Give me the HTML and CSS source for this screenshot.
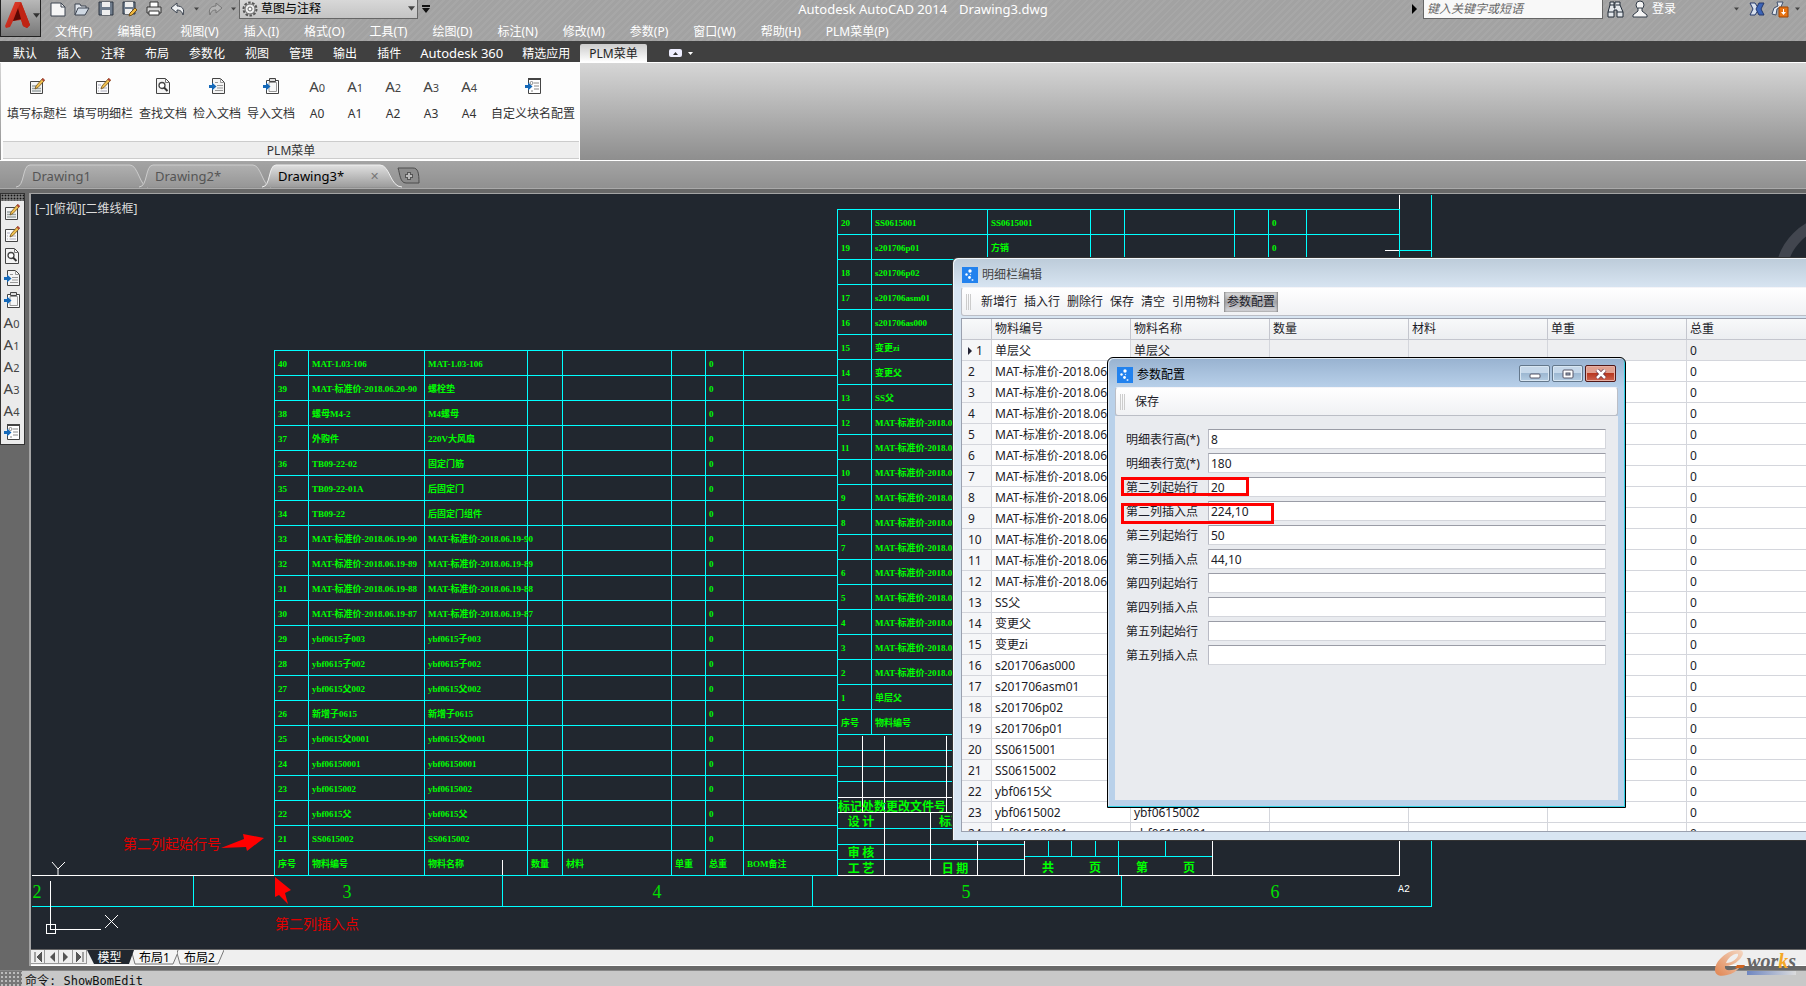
FILE: index.html
```html
<!DOCTYPE html>
<html lang="zh-CN">
<head>
<meta charset="utf-8">
<title>Autodesk AutoCAD 2014 - Drawing3.dwg</title>
<link rel="stylesheet" href="styles.css">
</head>
<body>
<svg class="defs" aria-hidden="true">
  <defs>
    <linearGradient id="tabOff" x1="0" y1="0" x2="0" y2="1"><stop offset="0" stop-color="#b0b0b0"/><stop offset="1" stop-color="#969696"/></linearGradient>
    <linearGradient id="tabOn" x1="0" y1="0" x2="0" y2="1"><stop offset="0" stop-color="#e0e0e0"/><stop offset="1" stop-color="#9c9c9c"/></linearGradient>
    <linearGradient id="red" x1="0" y1="0" x2="1" y2="1"><stop offset="0" stop-color="#e84432"/><stop offset="1" stop-color="#a81408"/></linearGradient>
    <linearGradient id="swoosh" x1="0" y1="1" x2="1" y2="0"><stop offset="0" stop-color="#e08450"/><stop offset="1" stop-color="#f4d8c4"/></linearGradient>
    <symbol id="i-pen" viewBox="0 0 16 16"><path d="M1.500 3.500H13.500V15.500H1.500Z" fill="#f4f4f4" stroke="#444"/><path d="M3 8H7M3 10.500H12M3 13H12" stroke="#9aa4a4" stroke-width="1.500"/><path d="M6 11L7 8L13.500 .5L15.500 2.500L9 9.500Z" fill="#f0c050" stroke="#70501c" stroke-width=".8"/><path d="M12.500 1.500L14 0L16 2L14.500 3.500Z" fill="#b04838"/></symbol>
    <symbol id="i-list" viewBox="0 0 16 16"><path d="M1.500 3.500H13.500V15.500H1.500Z" fill="#fafafa" stroke="#444"/><path d="M3 7H6M3 10H4M5.500 10H12M3 13H4M5.500 13H12" stroke="#aab" stroke-width="1"/><path d="M6 11L7 8L13.500 .5L15.500 2.500L9 9.500Z" fill="#f0c050" stroke="#70501c" stroke-width=".8"/><path d="M12.500 1.500L14 0L16 2L14.500 3.500Z" fill="#b04838"/></symbol>
    <symbol id="i-find" viewBox="0 0 16 16"><path d="M1.500 .5H10.500L14.500 4.500V15.500H1.500Z" fill="#f4f4f4" stroke="#444"/><path d="M10.500 .5V4.500H14.500" fill="none" stroke="#777"/><circle cx="7" cy="7.500" r="3" fill="#fff" stroke="#444" stroke-width="1.300"/><path d="M9 9.500L12.500 13" stroke="#333" stroke-width="2"/></symbol>
    <symbol id="i-in" viewBox="0 0 16 16"><path d="M3.500 .5H11.500L15.500 4.500V15.500H3.500Z" fill="#f4f4f4" stroke="#444"/><path d="M11.500 .5V4.500H15.500M6 4.500H9M8 7.500H14M8 10H14M6 12.500H14" fill="none" stroke="#999"/><path d="M0 7H3V4.500L7.500 8.500L3 12.500V10H0Z" fill="#1468b8"/></symbol>
    <symbol id="i-clip" viewBox="0 0 16 16"><path d="M3.500 2.500H15.500V15.500H3.500Z" fill="#fff" stroke="#444"/><path d="M6 4.500H13.500V13.500H6Z" fill="#f7f7f7" stroke="#999"/><path d="M6.500 .5H12.500V3.500H6.500Z" fill="#ddd" stroke="#444"/><path d="M0 7H3V4.500L7.500 8.500L3 12.500V10H0Z" fill="#1468b8"/></symbol>
    <symbol id="i-cfg" viewBox="0 0 16 16"><path d="M3.500 .5H15.500V15.500H3.500Z" fill="#fff" stroke="#444"/><path d="M3 1H16" stroke="#444" stroke-width="2"/><circle cx="6.500" cy="5" r="1.500" fill="none" stroke="#888"/><path d="M9 5H14M9 8H14M9 11H14M6 13H8" stroke="#888"/><path d="M0 7H3V4.500L7.500 8.500L3 12.500V10H0Z" fill="#1468b8"/></symbol>
    <symbol id="i-app" viewBox="0 0 16 16"><path d="M0 0H16V16H0Z" fill="#2282ee"/><circle cx="8" cy="4" r="1.700" fill="#fff"/><circle cx="4.500" cy="7.500" r="1.200" fill="#fff"/><circle cx="7.500" cy="10.500" r="1.400" fill="#fff"/><circle cx="10.500" cy="13" r="1" fill="#cfe4ff"/><circle cx="8.500" cy="7.500" r=".7" fill="#cfe4ff"/></symbol>
    <symbol id="i-down" viewBox="0 0 8 5"><path d="M0 0H8L4 5Z" fill="currentColor"/></symbol>
  </defs>
</svg>

<div class="app">
  <header class="top">
    <button class="app-btn" aria-label="应用程序菜单">
      <svg width="26" height="30" viewBox="0 0 26 30"><path d="M10 2H16L25 25L22 28L18 26L16 20L8 21L5 27L1 28L0 26Z" fill="url(#red)"/><path d="M16 2L25 25L22 28L18 26L13 8Z" fill="#c02414"/><path d="M13 8L16 19L8 21Z" fill="#5c0804"/></svg>
      <svg width="7" height="5"><use href="#i-down"/></svg>
    </button>
    <div class="top-main">
      <div class="title-row">
        <div class="qat">
          <button aria-label="新建"><svg width="16" height="16"><path d="M1 2H11L15 6V15H1Z" fill="#f6f6f6" stroke="#3c4450"/><path d="M11 2V6H15" fill="none" stroke="#3c4450"/></svg></button>
          <button aria-label="打开"><svg width="16" height="16"><path d="M1 14V3H6L7 5H12V8" fill="#dfe4ea" stroke="#3c4450"/><path d="M1 14L4 7H15L11 14Z" fill="#cfd8e2" stroke="#3c4450"/></svg></button>
          <button aria-label="保存"><svg width="16" height="16"><path d="M1 1H15V14H1Z" fill="#6f7c8c" stroke="#2c3440"/><path d="M4 1H12V6H4ZM4 9H12V14H4Z" fill="#eee"/></svg></button>
          <button aria-label="另存为"><svg width="16" height="16"><path d="M1 1H13V13H1Z" fill="#6f7c8c" stroke="#2c3440"/><path d="M3 1H11V6H3ZM3 8H10V13H3Z" fill="#eee"/><path d="M7 15L8 12L13 7L15 9L10 14Z" fill="#f0b840" stroke="#70501c"/></svg></button>
          <button aria-label="打印"><svg width="16" height="16"><path d="M4 1H12V7H4Z" fill="#fff" stroke="#333"/><path d="M1 6H15V12H1Z" fill="#d4d4d4" stroke="#333"/><path d="M3 10H13V14H3Z" fill="#fff" stroke="#333"/></svg></button>
          <button aria-label="放弃"><svg width="16" height="16"><path d="M1 7L7 2V5C12 5 15 8 13 14C12 11 11 9 7 9V12Z" fill="#eef0f2" stroke="#3c4450"/></svg></button>
          <button class="drop" aria-label="放弃列表"><svg width="5" height="4"><use href="#i-down"/></svg></button>
          <button aria-label="重做"><svg width="16" height="16"><path d="M15 7L9 2V5C4 5 1 8 3 14C4 11 5 9 9 9V12Z" fill="#b4b4b4" stroke="#777"/></svg></button>
          <button class="drop" aria-label="重做列表"><svg width="5" height="4"><use href="#i-down"/></svg></button>
        </div>
        <div class="workspace">
          <svg width="16" height="16" viewBox="0 0 16 16"><circle cx="8" cy="8" r="6.500" fill="none" stroke="#555" stroke-width="2" stroke-dasharray="2.500 1.500"/><circle cx="8" cy="8" r="5" fill="#eee" stroke="#666"/><circle cx="8" cy="8" r="2" fill="#fff" stroke="#666"/></svg>
          <select aria-label="工作空间"><option>草图与注释</option></select>
          <svg class="caret" width="7" height="5"><use href="#i-down"/></svg>
        </div>
        <svg class="qat-more" width="8" height="8"><path d="M0 0H8V2H0ZM0 3H8L4 8Z" fill="#111"/></svg>
        <div class="doc-title"><span>Autodesk AutoCAD 2014</span><span>Drawing3.dwg</span></div>
        <div class="infocenter">
          <svg width="5" height="10"><path d="M0 0L5 5L0 10Z" fill="#000"/></svg>
          <input class="search" type="text" placeholder="键入关键字或短语" aria-label="键入关键字或短语">
          <button aria-label="搜索"><svg width="17" height="18"><path d="M3 2H7V8H8V2H13V5L16 12V17H10V10H7V17H1V12L3 5Z" fill="#e4e8ec" stroke="#222c38"/><path d="M3 5H7M9 5H13M1 12H7M10 12H16" stroke="#222c38"/></svg></button>
          <button class="login"><svg width="16" height="18"><circle cx="8" cy="5" r="4" fill="#f4f4f4" stroke="#333c48"/><path d="M6 8V11L1 15V17H15V15L10 11V8Z" fill="#f4f4f4" stroke="#333c48"/></svg><span>登录</span></button>
          <button class="drop wide" aria-label="登录选项"><svg width="5" height="4"><use href="#i-down"/></svg></button>
          <button aria-label="Exchange"><svg width="16" height="16"><path d="M1 2H6L10 8L6 14H1L4 8Z" fill="#d8e0ee" stroke="#24386c"/><path d="M15 2H10L7 8L10 14H15L12 8Z" fill="#3c64b8" stroke="#24386c"/></svg></button>
          <button aria-label="保持连接"><svg width="18" height="17"><path d="M6 1L12 1L10 6L6 8L5 14L1 13L3 7L7 5Z" fill="#e4e8f0" stroke="#40506c"/><path d="M8 6H17V16H8Z" fill="#e87414" stroke="#9c4404"/><path d="M12 8H13V11H15L12.500 14L10 11H12Z" fill="#fff"/></svg></button>
          <button class="drop" aria-label="更多"><svg width="5" height="4"><use href="#i-down"/></svg></button>
        </div>
      </div>
      <nav class="menu">
        <a href="#">文件(F)</a><a href="#">编辑(E)</a><a href="#">视图(V)</a><a href="#">插入(I)</a><a href="#">格式(O)</a><a href="#">工具(T)</a><a href="#">绘图(D)</a><a href="#">标注(N)</a><a href="#">修改(M)</a><a href="#">参数(P)</a><a href="#">窗口(W)</a><a href="#">帮助(H)</a><a href="#">PLM菜单(P)</a>
      </nav>
    </div>
  </header>

  <div class="ribbon-tabs">
    <button>默认</button><button>插入</button><button>注释</button><button>布局</button><button>参数化</button><button>视图</button><button>管理</button><button>输出</button><button>插件</button><button class="latin">Autodesk 360</button><button>精选应用</button><button class="on">PLM菜单</button>
    <button class="mini" aria-label="最小化功能区"><svg width="26" height="10"><rect x="0" y="1" width="13" height="8" rx="2" fill="#eef"/><path d="M4 7L6.500 4L9 7Z" fill="#333"/><path d="M19 4H24L21.500 7Z" fill="#fff"/></svg></button>
  </div>

  <section class="ribbon">
    <div class="panel">
      <div class="panel-buttons">
        <button><svg width="16" height="16"><use href="#i-pen"/></svg><span>填写标题栏</span></button>
        <button><svg width="16" height="16"><use href="#i-list"/></svg><span>填写明细栏</span></button>
        <button><svg width="16" height="16"><use href="#i-find"/></svg><span>查找文档</span></button>
        <button><svg width="16" height="16"><use href="#i-in"/></svg><span>检入文档</span></button>
        <button><svg width="16" height="16"><use href="#i-clip"/></svg><span>导入文档</span></button>
        <button class="size"><b>A<small>0</small></b><span>A0</span></button>
        <button class="size"><b>A<small>1</small></b><span>A1</span></button>
        <button class="size"><b>A<small>2</small></b><span>A2</span></button>
        <button class="size"><b>A<small>3</small></b><span>A3</span></button>
        <button class="size"><b>A<small>4</small></b><span>A4</span></button>
        <button><svg width="16" height="16"><use href="#i-cfg"/></svg><span>自定义块名配置</span></button>
      </div>
      <div class="panel-title">PLM菜单</div>
    </div>
  </section>

  <div class="file-tabs">
    <button><svg viewBox="0 0 132 24" preserveAspectRatio="none"><path d="M0 23C9 23 6 1 14 1H114C122 1 124 23 132 23" fill="url(#tabOff)" stroke="#ccc"/></svg><span>Drawing1</span></button>
    <button><svg viewBox="0 0 132 24" preserveAspectRatio="none"><path d="M0 23C9 23 6 1 14 1H114C122 1 124 23 132 23" fill="url(#tabOff)" stroke="#ccc"/></svg><span>Drawing2*</span></button>
    <button class="on"><svg viewBox="0 0 140 24" preserveAspectRatio="none"><path d="M0 23C9 23 6 1 14 1H118C128 1 128 23 140 23" fill="url(#tabOn)" stroke="#eee"/></svg><span>Drawing3*</span><i>✕</i></button>
    <button class="new" aria-label="新图形"><svg width="24" height="18"><path d="M1 1H16C21 1 22 6 22 16H9C3 16 3 7 1 1Z" fill="#8c8c8c" stroke="#4c4c4c"/><path d="M8 9H16M12 5V13" stroke="#555" stroke-width="4"/><path d="M9 9H15M12 6V12" stroke="#bbb" stroke-width="2"/></svg></button>
  </div>

  <main class="work">
    <aside class="tools">
      <div class="grip"></div>
      <button aria-label="填写标题栏"><svg width="16" height="16"><use href="#i-pen"/></svg></button>
      <button aria-label="填写明细栏"><svg width="16" height="16"><use href="#i-list"/></svg></button>
      <button aria-label="查找文档"><svg width="16" height="16"><use href="#i-find"/></svg></button>
      <button aria-label="检入文档"><svg width="16" height="16"><use href="#i-in"/></svg></button>
      <button aria-label="导入文档"><svg width="16" height="16"><use href="#i-clip"/></svg></button>
      <button><b>A<small>0</small></b></button>
      <button><b>A<small>1</small></b></button>
      <button><b>A<small>2</small></b></button>
      <button><b>A<small>3</small></b></button>
      <button><b>A<small>4</small></b></button>
      <button aria-label="自定义块名配置"><svg width="16" height="16"><use href="#i-cfg"/></svg></button>
    </aside>

    <div class="view">
      <div class="canvas">
        <div class="view-label">[−][俯视][二维线框]</div>
        <svg class="sheet" width="1775" height="755" viewBox="31 194 1775 755">
          <circle cx="1836" cy="276" r="55" fill="none" stroke="#42464f" stroke-width="11"/>
          <g transform="translate(.5 .5)" fill="none" shape-rendering="crispEdges">
            <path stroke="#0ff" d="M31 906H1431V194M193 875V906M502 875V906M812 875V906M1121 875V906M1399 209V875M1399 250H1431M837 734V875M837 750H1024M837 766H1024M837 781H1024M837 828H1024M837 844H1024M837 859H1024M1024 856H1212M1048 835V856M1071 835V856M1095 835V856M1118 835V875M1165 835V856"/>
            <path stroke="#fff" d="M31 875H274M837 875H1399V735M1399 194V209M1384 250H1399M502 859V875M862 735V812M884 735V875M946 735V812M837 797H1024M837 812H1024M930 812V875M977 812V875M1024 812V875M1212 835V875"/>
            <path stroke="#fff" d="M50 880V929H100M46 924H55V933H46Z"/>
          </g>
          <path d="M52 862L58 869L65 862M58 869V875M105 915L118 928M118 915L105 928" fill="none" stroke="#fff"/>
          <path d="M221 848L244 839L243 834L264 838L247 851L246 847ZM275 877L291 890L285 893L288 904L279 895L275 897Z" fill="#f00"/>
          <g class="zone">
            <text x="37" y="898">2</text><text x="347" y="898">3</text><text x="657" y="898">4</text><text x="966" y="898">5</text><text x="1275" y="898">6</text>
          </g>
          <g class="block">
            <text x="850" y="811">标记</text><text x="874" y="811">处数</text>
            <text x="916" y="811">更改文件号</text><text x="861" y="826">设 计</text><text x="951" y="826">标准</text>
            <text x="861" y="857">审 核</text><text x="861" y="873">工 艺</text><text x="955" y="873">日 期</text>
            <text x="1048" y="872">共</text><text x="1095" y="872">页</text><text x="1142" y="872">第</text><text x="1189" y="872">页</text>
          </g>
          <text class="a2" x="1398" y="892">A2</text>
          <g class="note"><text x="123" y="849">第二列起始行号</text><text x="275" y="929">第二列插入点</text></g>
        </svg>

        <table class="bom bom-left">
          <colgroup><col class="w34"><col class="w116"><col class="w103"><col class="w35"><col class="w109"><col class="w34"><col class="w38"><col class="w94"></colgroup>
          <tbody>
          <tr><td>40<td>MAT-1.03-106<td>MAT-1.03-106<td><td><td><td>0<td></tr>
          <tr><td>39<td>MAT-标准价-2018.06.20-90<td>螺栓垫<td><td><td><td>0<td></tr>
          <tr><td>38<td>螺母M4-2<td>M4螺母<td><td><td><td>0<td></tr>
          <tr><td>37<td>外购件<td>220V大风扇<td><td><td><td>0<td></tr>
          <tr><td>36<td>TB09-22-02<td>固定门筋<td><td><td><td>0<td></tr>
          <tr><td>35<td>TB09-22-01A<td>后固定门<td><td><td><td>0<td></tr>
          <tr><td>34<td>TB09-22<td>后固定门组件<td><td><td><td>0<td></tr>
          <tr><td>33<td>MAT-标准价-2018.06.19-90<td>MAT-标准价-2018.06.19-90<td><td><td><td>0<td></tr>
          <tr><td>32<td>MAT-标准价-2018.06.19-89<td>MAT-标准价-2018.06.19-89<td><td><td><td>0<td></tr>
          <tr><td>31<td>MAT-标准价-2018.06.19-88<td>MAT-标准价-2018.06.19-88<td><td><td><td>0<td></tr>
          <tr><td>30<td>MAT-标准价-2018.06.19-87<td>MAT-标准价-2018.06.19-87<td><td><td><td>0<td></tr>
          <tr><td>29<td>ybf0615子003<td>ybf0615子003<td><td><td><td>0<td></tr>
          <tr><td>28<td>ybf0615子002<td>ybf0615子002<td><td><td><td>0<td></tr>
          <tr><td>27<td>ybf0615父002<td>ybf0615父002<td><td><td><td>0<td></tr>
          <tr><td>26<td>新增子0615<td>新增子0615<td><td><td><td>0<td></tr>
          <tr><td>25<td>ybf0615父0001<td>ybf0615父0001<td><td><td><td>0<td></tr>
          <tr><td>24<td>ybf06150001<td>ybf06150001<td><td><td><td>0<td></tr>
          <tr><td>23<td>ybf0615002<td>ybf0615002<td><td><td><td>0<td></tr>
          <tr><td>22<td>ybf0615父<td>ybf0615父<td><td><td><td>0<td></tr>
          <tr><td>21<td>SS0615002<td>SS0615002<td><td><td><td>0<td></tr>
          <tr><td>序号<td>物料编号<td>物料名称<td>数量<td>材料<td>单重<td>总重<td>BOM备注</tr>
          </tbody>
        </table>

        <table class="bom bom-right">
          <colgroup><col class="w34"><col class="w116"><col class="w103"><col class="w34"><col class="w110"><col class="w34"><col class="w38"><col class="w93"></colgroup>
          <tbody>
          <tr><td>20<td>SS0615001<td>SS0615001<td><td><td><td>0<td></tr>
          <tr><td>19<td>s201706p01<td>方销<td><td><td><td>0<td></tr>
          <tr><td>18<td>s201706p02<td><td><td><td><td><td></tr>
          <tr><td>17<td>s201706asm01<td><td><td><td><td><td></tr>
          <tr><td>16<td>s201706as000<td><td><td><td><td><td></tr>
          <tr><td>15<td>变更zi<td><td><td><td><td><td></tr>
          <tr><td>14<td>变更父<td><td><td><td><td><td></tr>
          <tr><td>13<td>SS父<td><td><td><td><td><td></tr>
          <tr><td>12<td>MAT-标准价-2018.06.<td><td><td><td><td><td></tr>
          <tr><td>11<td>MAT-标准价-2018.06.<td><td><td><td><td><td></tr>
          <tr><td>10<td>MAT-标准价-2018.06.<td><td><td><td><td><td></tr>
          <tr><td>9<td>MAT-标准价-2018.06.<td><td><td><td><td><td></tr>
          <tr><td>8<td>MAT-标准价-2018.06.<td><td><td><td><td><td></tr>
          <tr><td>7<td>MAT-标准价-2018.06.<td><td><td><td><td><td></tr>
          <tr><td>6<td>MAT-标准价-2018.06.<td><td><td><td><td><td></tr>
          <tr><td>5<td>MAT-标准价-2018.06.<td><td><td><td><td><td></tr>
          <tr><td>4<td>MAT-标准价-2018.06.<td><td><td><td><td><td></tr>
          <tr><td>3<td>MAT-标准价-2018.06.<td><td><td><td><td><td></tr>
          <tr><td>2<td>MAT-标准价-2018.06.<td><td><td><td><td><td></tr>
          <tr><td>1<td>单层父<td><td><td><td><td><td></tr>
          <tr><td>序号<td>物料编号<td><td><td><td><td><td></tr>
          </tbody>
        </table>

        <section class="win editor">
          <div class="win-title"><svg width="16" height="16"><use href="#i-app"/></svg><span>明细栏编辑</span></div>
          <div class="win-tools">
            <button>新增行</button><button>插入行</button><button>删除行</button><button>保存</button><button>清空</button><button>引用物料</button><button class="on">参数配置</button>
          </div>
          <div class="grid-box">
            <table class="grid">
              <colgroup><col class="c-no"><col class="c-std"><col class="c-std"><col class="c-std"><col class="c-std"><col class="c-std"><col></colgroup>
              <thead><tr><th></th><th scope="col">物料编号</th><th scope="col">物料名称</th><th scope="col">数量</th><th scope="col">材料</th><th scope="col">单重</th><th scope="col">总重</th></tr></thead>
              <tbody>
              <tr class="cur"><th scope="row"><svg width="4" height="8"><path d="M0 0L4 4L0 8Z" fill="#223"/></svg>1</th><td>单层父<td>单层父<td><td><td><td>0</tr>
              <tr><th scope="row">2</th><td>MAT-标准价-2018.06.<td><td><td><td><td>0</tr>
              <tr><th scope="row">3</th><td>MAT-标准价-2018.06.<td><td><td><td><td>0</tr>
              <tr><th scope="row">4</th><td>MAT-标准价-2018.06.<td><td><td><td><td>0</tr>
              <tr><th scope="row">5</th><td>MAT-标准价-2018.06.<td><td><td><td><td>0</tr>
              <tr><th scope="row">6</th><td>MAT-标准价-2018.06.<td><td><td><td><td>0</tr>
              <tr><th scope="row">7</th><td>MAT-标准价-2018.06.<td><td><td><td><td>0</tr>
              <tr><th scope="row">8</th><td>MAT-标准价-2018.06.<td><td><td><td><td>0</tr>
              <tr><th scope="row">9</th><td>MAT-标准价-2018.06.<td><td><td><td><td>0</tr>
              <tr><th scope="row">10</th><td>MAT-标准价-2018.06.<td><td><td><td><td>0</tr>
              <tr><th scope="row">11</th><td>MAT-标准价-2018.06.<td><td><td><td><td>0</tr>
              <tr><th scope="row">12</th><td>MAT-标准价-2018.06.<td><td><td><td><td>0</tr>
              <tr><th scope="row">13</th><td>SS父<td><td><td><td><td>0</tr>
              <tr><th scope="row">14</th><td>变更父<td><td><td><td><td>0</tr>
              <tr><th scope="row">15</th><td>变更zi<td><td><td><td><td>0</tr>
              <tr><th scope="row">16</th><td>s201706as000<td><td><td><td><td>0</tr>
              <tr><th scope="row">17</th><td>s201706asm01<td><td><td><td><td>0</tr>
              <tr><th scope="row">18</th><td>s201706p02<td><td><td><td><td>0</tr>
              <tr><th scope="row">19</th><td>s201706p01<td><td><td><td><td>0</tr>
              <tr><th scope="row">20</th><td>SS0615001<td><td><td><td><td>0</tr>
              <tr><th scope="row">21</th><td>SS0615002<td><td><td><td><td>0</tr>
              <tr><th scope="row">22</th><td>ybf0615父<td><td><td><td><td>0</tr>
              <tr><th scope="row">23</th><td>ybf0615002<td>ybf0615002<td><td><td><td>0</tr>
              <tr><th scope="row">24</th><td>ybf06150001<td>ybf06150001<td><td><td><td>0</tr>
              </tbody>
            </table>
          </div>
        </section>

        <section class="win dialog">
          <div class="win-title">
            <svg width="16" height="16"><use href="#i-app"/></svg><span>参数配置</span>
            <div class="win-btns">
              <button aria-label="最小化"><svg width="12" height="10"><rect x="1" y="5" width="10" height="4" rx="1" fill="#fff" stroke="#556"/></svg></button>
              <button aria-label="最大化"><svg width="12" height="10"><rect x="1" y="1" width="10" height="8" rx="1" fill="#fff" stroke="#556"/><rect x="4" y="4" width="4" height="2" fill="#9ab" stroke="#556"/></svg></button>
              <button class="close" aria-label="关闭"><svg width="12" height="10"><path d="M2 1L10 9M10 1L2 9" stroke="#634" stroke-width="4"/><path d="M2 1L10 9M10 1L2 9" stroke="#fff" stroke-width="2.500"/></svg></button>
            </div>
          </div>
          <div class="win-tools"><button>保存</button></div>
          <form class="params">
            <label for="p1">明细表行高(*)</label><input id="p1" type="text" value="8">
            <label for="p2">明细表行宽(*)</label><input id="p2" type="text" value="180">
            <label for="p3">第二列起始行</label><input id="p3" type="text" value="20">
            <label for="p4">第二列插入点</label><input id="p4" type="text" value="224,10">
            <label for="p5">第三列起始行</label><input id="p5" type="text" value="50">
            <label for="p6">第三列插入点</label><input id="p6" type="text" value="44,10">
            <label for="p7">第四列起始行</label><input id="p7" type="text">
            <label for="p8">第四列插入点</label><input id="p8" type="text">
            <label for="p9">第五列起始行</label><input id="p9" type="text">
            <label for="p10">第五列插入点</label><input id="p10" type="text">
          </form>
          <div class="mark mark-row"></div>
          <div class="mark mark-point"></div>
        </section>
      </div>

      <div class="layouts">
        <button class="nav" aria-label="第一个"><svg width="8" height="10"><path d="M1 0V10M8 0L3 5L8 10Z" fill="#555" stroke="#555"/></svg></button>
        <button class="nav" aria-label="上一个"><svg width="8" height="10"><path d="M7 0L2 5L7 10Z" fill="#555"/></svg></button>
        <button class="nav" aria-label="下一个"><svg width="8" height="10"><path d="M1 0L6 5L1 10Z" fill="#555"/></svg></button>
        <button class="nav" aria-label="最后一个"><svg width="8" height="10"><path d="M7 0V10M0 0L5 5L0 10Z" fill="#555" stroke="#555"/></svg></button>
        <button class="lay on"><svg width="47" height="15"><path d="M0 0H47L42 14H7Z" fill="#21272f"/></svg><span>模型</span></button>
        <button class="lay"><svg width="47" height="15"><path d="M1 0L0 3L3 14H41L47 0" fill="#f4f4f4" stroke="#777"/></svg><span>布局1</span></button>
        <button class="lay"><svg width="47" height="15"><path d="M1 0L0 3L3 14H41L47 0" fill="#f4f4f4" stroke="#777"/></svg><span>布局2</span></button>
      </div>
    </div>
  </main>

  <footer class="command">
    <div class="cmd-grip"></div>
    <div class="cmd-text">命令: ShowBomEdit</div>
  </footer>

  <div class="brand">
    <svg width="32" height="28" viewBox="0 0 32 28" role="img" aria-label="e"><path d="M24 10C29 5 30 0 23 0C12 0 0 11 0 20C0 25 5 27 12 25C17 24 22 21 25 17C18 21 9 22 10 16C15 16 20 14 24 10ZM11 13C13 8 19 3 23 4C24 8 17 13 11 13Z" fill="url(#swoosh)"/><path d="M22 15H30L28 18H20Z" fill="#d06420"/></svg>
    <div><span>wor<em>k</em>s</span></div>
  </div>
</div>
</body>
</html>
```
FILE: styles.css
```css
* { box-sizing: border-box; }
body {
  margin: 0;
  font: 12px/16px "Noto Sans", "Noto Sans CJK SC", sans-serif;
  color: #1c1c28;
}
button {
  margin: 0; padding: 0; border: 0;
  background: none; color: inherit; font: inherit;
  white-space: nowrap;
}
svg { display: block; flex: none; }
a { color: inherit; text-decoration: none; }
.defs { position: absolute; width: 0; height: 0; }
.app {
  position: relative;
  display: flex; flex-direction: column;
  height: 100vh; overflow: hidden;
  background: #686868;
}

/* title bar and menu */
.top {
  display: flex; flex: none; height: 41px;
  background: repeating-linear-gradient(135deg, #a2a2a2 0 3px, #a7a7a7 3px 5px);
  color: #fff;
}
.app-btn {
  display: flex; align-items: center; gap: 2px;
  width: 41px; height: 37px; padding: 0 0 6px 4px;
  border: 1px solid #222; border-top: 0;
  background: linear-gradient(#b8b8b8, #787878);
  color: #333;
}
.top-main { flex: 1; min-width: 0; }
.title-row { display: flex; align-items: center; height: 20px; padding: 0 6px 2px 9px; }
.qat { display: flex; align-items: center; gap: 8px; color: #444; }
.drop { color: #444; }
.workspace {
  display: flex; align-items: center; gap: 3px;
  width: 179px; height: 19px; margin-left: 3px; padding: 0 2px;
  border: 1px solid #666; border-top: 0;
  background: linear-gradient(#d8d8d8, #c4c4c4);
  color: #444;
}
.workspace select {
  flex: 1; appearance: none; border: 0; padding: 0;
  background: none; color: #000; font: inherit;
}
.qat-more { margin-left: 4px; }
.doc-title {
  display: flex; flex: 1; gap: 12px;
  justify-content: center; font-size: 13px; padding-left: 4px;
}
.infocenter { display: flex; align-items: center; gap: 6px; }
.search {
  width: 180px; height: 19px; padding: 0 3px; margin-right: -2px;
  border: 1px solid #666; border-top: 0; background: #f8f8f8;
  font: italic 12px/16px "Noto Sans", "Noto Sans CJK SC", sans-serif;
}
.search::placeholder { color: #666; opacity: 1; }
.login { display: flex; align-items: center; gap: 4px; width: 98px; padding-left: 2px; }
.drop.wide { margin-right: 4px; }
.menu { display: flex; gap: 25px; padding: 4px 0 0 14px; }

/* ribbon */
.ribbon-tabs {
  display: flex; flex: none; align-items: flex-end;
  height: 22px; padding-left: 3px;
  border-bottom: 1px solid #fff;
  background: #404040; color: #fff;
}
.ribbon-tabs button { height: 18px; padding: 0 10px; line-height: 17px; }
.ribbon-tabs .on {
  padding: 0 9px; background: linear-gradient(#ccc, #fff);
  color: #222; border-radius: 2px 2px 0 0;
}
.ribbon-tabs .latin { padding: 0 9px; font-size: 13px; }
.ribbon-tabs .mini { padding: 0 22px; }
.ribbon {
  flex: none; height: 98px; padding-left: 1px;
  border-bottom: 1px solid #fff;
  background: linear-gradient(#d6d6d6, #8e8e8e);
}
.panel {
  display: flex; flex-direction: column;
  width: max-content; height: 97px; background: #fdfdfd; color: #333;
}
.panel-buttons { display: flex; flex: 1; padding: 15px 2px 0 3px; }
.panel-buttons button {
  display: flex; flex-direction: column; align-items: center;
  gap: 12px; height: 44px; padding: 0 3px;
}
.panel-buttons .size { width: 38px; }
b {
  display: flex; align-items: baseline; height: 16px;
  font-size: 15px; line-height: 16px; font-weight: 400; color: #444;
}
b small { font-size: 11px; }
.panel-title {
  height: 18px; margin: 0 1px 1px 2px; line-height: 18px;
  border: 1px solid #ccc; border-width: 1px 0;
  background: #eee; text-align: center;
}

/* drawing file tabs */
.file-tabs {
  display: flex; flex: none; align-items: flex-end;
  height: 28px; padding-left: 16px;
  border-bottom: 1px solid #aaa;
  background: linear-gradient(#a4a4a4, #909090);
  color: #555; font-size: 13px;
}
.file-tabs button {
  display: flex; position: relative; align-items: center; justify-content: space-between;
  width: 132px; height: 24px; margin-right: -9px; padding: 0 23px 0 16px;
}
.file-tabs button > svg { position: absolute; left: 0; top: 0; width: 100%; height: 100%; }
.file-tabs span, .file-tabs i { position: relative; font-style: normal; }
.file-tabs i { font-size: 11px; }
.file-tabs .on { width: 140px; color: #000; z-index: 1; }
.file-tabs .on i { color: #777; }
.file-tabs .new { width: 24px; padding: 0; margin-left: 4px; }
.file-tabs .new > svg { position: static; height: 18px; }

/* work area */
.work { display: flex; flex: 1; min-height: 0; gap: 4px; padding-top: 4px; }
.tools {
  display: flex; flex-direction: column; align-self: flex-start;
  width: 25px; padding: 0 2px 1px 0;
  border: 1px solid #333; background: #ebebeb;
}
.tools button { display: flex; align-items: center; justify-content: center; height: 22px; }
.grip {
  height: 7px; margin-right: -2px;
  background: radial-gradient(#111 40%, transparent 50%) 0 0 / 3px 3px #777;
}
.view { display: flex; flex: 1; flex-direction: column; min-width: 0; border: 1px solid #a4a4a4; border-width: 1px 0 0 2px; }
.canvas { position: relative; flex: 1; min-height: 0; overflow: hidden; background: #21272f; }
.view-label { position: absolute; left: 4px; top: 7px; color: #ddd; }
.sheet { position: absolute; left: 0; top: 0; }
.zone text { fill: #00e000; font: 18px "Liberation Serif", serif; text-anchor: middle; }
.block text { fill: #0f0; font: 12px "Noto Sans CJK SC", sans-serif; font-weight: 700; text-anchor: middle; }
.note text { fill: #e00000; font: 14px "Noto Sans CJK SC", sans-serif; }
.a2 { fill: #fff; font: 10px "Liberation Mono", monospace; }

/* parts lists drawn on the sheet */
.bom {
  position: absolute; table-layout: fixed;
  border-spacing: 0; border-right: 1px solid #0ff; border-bottom: 1px solid #0ff;
  color: #0f0; font: bold 9px/12px "Liberation Serif", "Noto Sans CJK SC", serif;
}
.bom-left { left: 243px; top: 156px; width: 564px; }
.bom-right { left: 806px; top: 15px; width: 563px; }
.bom tr { height: 25px; }
.bom td {
  padding: 2px 0 0 3px; border: 1px solid #0ff; border-width: 1px 0 0 1px;
  white-space: nowrap;
}
.w34 { width: 34px; } .w35 { width: 35px; } .w38 { width: 38px; }
.w93 { width: 93px; } .w94 { width: 94px; } .w103 { width: 103px; }
.w109 { width: 109px; } .w110 { width: 110px; } .w116 { width: 116px; }

/* floating windows */
.win {
  position: absolute; display: flex; flex-direction: column;
  padding: 0 8px 8px; border: 1px solid #333;
  border-radius: 6px 6px 0 0;
}
.editor {
  left: 921px; top: 63px; right: -12px; height: 584px;
  background: linear-gradient(#bccbd9, #d8e5f2 30px);
  box-shadow: inset 1px 1px #f2f6fa;
}
.dialog {
  left: 1076px; top: 163px; width: 519px; height: 451px; padding: 0 7px 7px;
  background: linear-gradient(#98b2d0, #b9d1ea 30px);
  border-color: #000;
  box-shadow: inset -1px -1px #30d0e4, inset 1px 1px #dfe9f3;
}
.win-title { display: flex; flex: none; align-items: center; gap: 4px; height: 29px; padding: 5px 0 0 1px; color: #444; }
.dialog .win-title { padding-left: 2px; color: #000; }
.win-btns { display: flex; gap: 2px; margin-left: auto; padding: 0 2px 3px 0; }
.win-btns button {
  display: flex; align-items: center; justify-content: center;
  width: 31px; height: 17px; border: 1px solid #64788c; border-radius: 2px;
  background: linear-gradient(#c6d8ea 45%, #9db8d2 50%, #b4cce2);
  box-shadow: inset 0 0 0 1px #d8e6f2;
}
.win-btns .close { border-color: #501818; background: linear-gradient(#e0a090 45%, #b83820 50%, #cc6450); box-shadow: inset 0 0 0 1px #e8b0a4; }
.win-tools {
  position: relative; display: flex; align-items: center; gap: 1px;
  height: 29px; flex: none; padding-left: 16px;
  border: 1px solid #bbbec6; border-top-color: #f4f4f8;
  border-radius: 3px; background: linear-gradient(#fff, #f0f1f4);
}
.win-tools::before {
  content: ""; position: absolute; left: 4px; top: 6px; width: 6px; height: 16px;
  background: repeating-linear-gradient(90deg, #ccc 0 1px, transparent 1px 2px);
}
.win-tools button { height: 20px; padding: 0 3px; }
.win-tools .on { background: linear-gradient(#e0e0e0, #a4a4a8 50%, #dcdce0); box-shadow: inset 1px 0 2px #888, inset -1px 0 2px #888; }
.grid-box {
  flex: 1; min-height: 0; overflow: hidden; margin-top: 2px;
  border: 1px solid #9aa0ae; background: #fff;
}
.grid { width: 100%; table-layout: fixed; border-spacing: 0; }
.c-no { width: 29px; } .c-std { width: 139px; }
.grid tr { height: 21px; }
.grid th, .grid td {
  height: 21px; padding: 2px 3px 0; border: 1px solid #d4d6dc; border-width: 0 0 1px;
  text-align: left; font-weight: 400; white-space: nowrap; overflow: hidden;
}
.grid td, .grid thead th + th { border-left-width: 1px; }
.grid thead th { padding-top: 0; background: linear-gradient(#f8f9fa, #eceef1); border-color: #c4c6ce; }
.grid tbody th { padding-left: 6px; background: #f5f6f8; }
.grid .cur td { background: #eeeff1; }
.grid .cur td:nth-of-type(1) { background: #fff; }
.grid th svg { display: inline-block; margin-right: 4px; }
.params {
  display: grid; flex: 1; align-content: start;
  grid-template-columns: 82px 1fr; row-gap: 4px;
  padding: 13px 12px 0 11px; background: #e9ebef;
}
.params label { line-height: 22px; height: 20px; white-space: nowrap; }
.params input {
  width: 100%; height: 20px; padding: 0 2px;
  border: 1px solid #d4d6dc; border-top-color: #9a9ca6; border-left-color: #b8bac4;
  background: #fff; color: inherit; font: inherit;
}
.mark { position: absolute; border: 3px solid #f00; }
.mark-row { left: 13px; top: 119px; width: 128px; height: 19px; }
.mark-point { left: 13px; top: 145px; width: 153px; height: 21px; }

/* layout tabs and command line */
.layouts {
  display: flex; flex: none; height: 17px;
  border-top: 1px solid #666; border-bottom: 1px solid #fff; background: #efefef; color: #000;
}
.nav {
  display: flex; align-items: center; justify-content: center;
  width: 14px; height: 14px; border: 1px solid #999; border-width: 0 1px 1px 0;
}
.lay { position: relative; width: 45px; height: 14px; line-height: 13px; }
.lay svg { position: absolute; left: 0; top: 0; }
.lay span { position: relative; }
.lay.on { color: #fff; z-index: 1; }
.command {
  display: flex; flex: none; height: 16px; margin-top: 4px; overflow: hidden;
  border-top: 1px solid #888; background: #c8c8c8;
}
.cmd-grip {
  width: 22px; margin-right: 3px;
  background: radial-gradient(#bbb 30%, transparent 40%) 0 0 / 4px 4px #777;
}
.cmd-text { padding-top: 2px; font: 12px/16px "DejaVu Sans Mono", "Noto Sans CJK SC", monospace; color: #111; white-space: nowrap; }

/* corner brand */
.brand {
  position: absolute; right: 10px; bottom: 8px;
  display: flex; align-items: flex-end;
  font: italic bold 20px/20px "Liberation Serif", serif; color: #666;
}
.brand div { margin-bottom: 3px; border-bottom: 4px solid; border-image: linear-gradient(90deg, #6c84c0, #ddd) 1; }
.brand em { color: #f4a828; }
```
